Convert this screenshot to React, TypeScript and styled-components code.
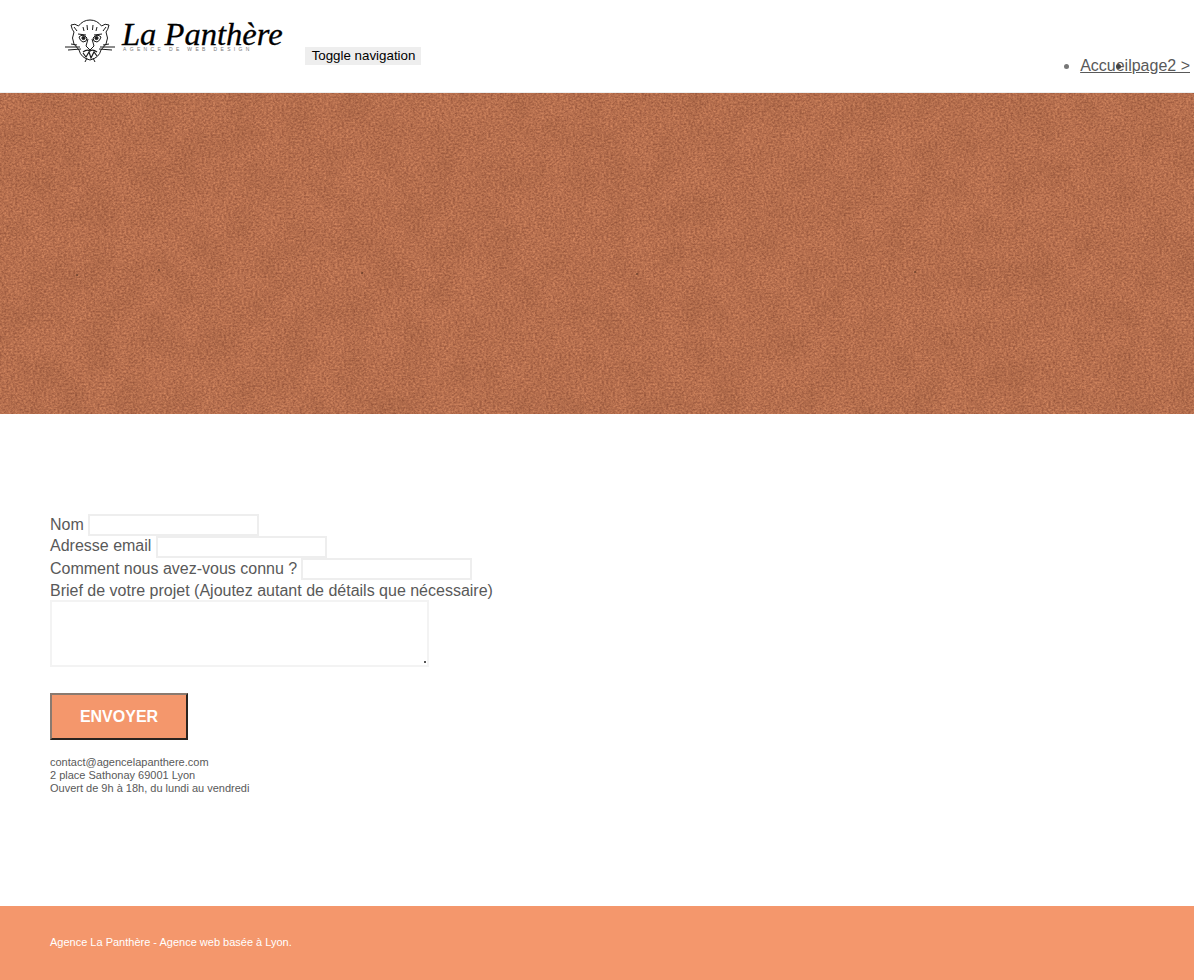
import React from "react";
import styled, { createGlobalStyle } from "styled-components";

const Global = createGlobalStyle`
  html, body { margin: 0; padding: 0; background: #fff; }
  body { font-family: "Liberation Sans", Arial, sans-serif; font-size: 16px; color: #595959; }
`;

const Header = styled.header`
  height: 92px;
  border-bottom: 1px solid #eeeeee;
  display: flex;
  position: relative;
`;
const Brand = styled.a`
  display: flex;
  align-items: flex-start;
  gap: 11px;
  padding: 19px 0 0 65px;
  width: 240px;
  flex: none;
  text-decoration: none;
`;
const BrandText = styled.div`
  display: flex;
  flex-direction: column;
`;
const BrandName = styled.span`
  font-family: "Liberation Serif", serif;
  font-style: italic;
  font-size: 32.6px;
  line-height: 31px;
  color: #000;
  -webkit-text-stroke: 0.3px #000;
  white-space: nowrap;
`;
const BrandTag = styled.span`
  font-size: 5px;
  line-height: 6px;
  letter-spacing: 3.35px;
  color: #777;
  margin-top: -4px;
  margin-left: 1px;
  white-space: nowrap;
`;
const Toggle = styled.button`
  align-self: flex-start;
  margin-top: 47px;
  width: 116px;
  height: 18px;
  padding: 0 0 0 1px;
  border: 0;
  background: #eeeeee;
  color: #000;
  font: 13.333px/18px "Liberation Sans", Arial, sans-serif;
`;
const NavList = styled.ul`
  margin: 0 4px 0 auto;
  padding: 56px 0 0;
  display: flex;
  height: 20px;
  list-style: disc;
  color: #777;
`;
const NavItem = styled.li<{ $dark?: boolean }>`
  line-height: 20px;
  &::marker { color: ${(p) => (p.$dark ? "#444" : "#777")}; }
`;
const NavLink = styled.a`
  color: #595959;
  text-decoration: underline;
`;

const Hero = styled.section`
  height: 321px;
  background: #b97150;
  position: relative;
  overflow: hidden;
`;
const HeroTexture = styled.svg`
  position: absolute;
  inset: 0;
  width: 100%;
  height: 100%;
  display: block;
`;

const Main = styled.main`
  padding: 100px 50px 0;
  height: 492px;
  box-sizing: border-box;
`;
const Form = styled.form`
  display: flex;
  flex-direction: column;
  align-items: flex-start;
`;
const Row = styled.label<{ $h?: number }>`
  display: flex;
  align-items: center;
  gap: 4.2px;
  height: ${(p) => p.$h ?? 22}px;
  line-height: 20px;
  white-space: nowrap;
`;
const LabelText = styled.span<{ $shift?: number }>`
  position: relative;
  top: ${(p) => p.$shift ?? 0}px;
`;
const Input = styled.input`
  width: 171px;
  height: 22px;
  box-sizing: border-box;
  border: 2px solid #eeeeee;
  background: #fff;
  padding: 1px 2px;
  margin: 0;
`;
const Area = styled.textarea`
  display: block;
  width: 379px;
  height: 67px;
  box-sizing: border-box;
  border: 2px solid #f3f3f3;
  background: #fff;
  margin: 0;
  &::-webkit-resizer {
    background: linear-gradient(#555, #555) no-repeat right 1px bottom 2px / 2px 2px;
  }
`;
const Send = styled.button`
  width: 138px;
  height: 47px;
  margin-top: 26px;
  border: 2px solid;
  border-color: #8a7a70 #2a2420 #2a2420 #8a7a70;
  background: #f4976c;
  color: #fff;
  font: bold 16px "Liberation Sans", Arial, sans-serif;
  text-transform: uppercase;
  padding: 0;
`;
const Contact = styled.p`
  margin: 16px 0 0;
  font-size: 11px;
  line-height: 13px;
  color: #595959;
`;
const Footer = styled.footer`
  height: 74px;
  background: #f4976c;
  color: #fff;
  font-size: 11px;
  line-height: 13px;
  padding: 30px 50px 0;
  box-sizing: border-box;
`;

const Panther = () => (
  <svg width="50" height="46" viewBox="0 0 50 46" fill="none" stroke="#1a1a1a" strokeWidth="1" style={{ marginTop: -2, marginRight: -4, flex: "none" }}>
    <path d="M6 8 Q10 6 13.5 9 Q18 3 25 3 Q32 3 36.5 9 Q40 6 44 8 Q43 13 41 15 Q44 21 41 27 L36 33 Q34 41 25 43 Q16 41 14 33 L9 27 Q6 21 9 15 Q7 13 6 8 Z" fill="#fff" />
    <path d="M9 10 L12 14 M41 10 L38 14" />
    <path d="M14 20 Q18 16 22 21 Q22 25 18 25 Q15 24 14 20 Z M36 20 Q32 16 28 21 Q28 25 32 25 Q35 24 36 20 Z" />
    <circle cx="18.5" cy="21" r="1.6" fill="#1a1a1a" />
    <circle cx="31.5" cy="21" r="1.6" fill="#1a1a1a" />
    <path d="M13 17 L21 18 M37 17 L29 18 M18 10 L19 14 M22 8 L22.5 13 M28 8 L27.5 13 M32 10 L31 14" />
    <path d="M23 22 L21 29 L25 33 L29 29 L27 22" />
    <path d="M0 30 L15 30 M3 33 L16 32 M6 27 L12 28 M50 30 L35 30 M47 33 L34 32 M44 27 L38 28" />
    <path d="M18 35 Q22 32 25 34 Q28 32 32 35 M18 36 L21 40 L24 35 L26 41 L29 35 L32 39" strokeWidth="1.2" />
    <path d="M20 45 L22 41 M30 45 L28 41" />
  </svg>
);

const Texture = () => (
  <HeroTexture aria-hidden="true">
    <defs>
      <filter id="grain" x="0" y="0" width="100%" height="100%" colorInterpolationFilters="sRGB">
        <feTurbulence type="fractalNoise" baseFrequency="0.45 0.55" numOctaves={2} seed={4} />
        <feGaussianBlur stdDeviation="0.6" />
        <feColorMatrix values="0.34 0 0 0 0.55  0.28 0 0 0 0.30  0.2 0 0 0 0.21  0 0 0 0 1" />
      </filter>
      <filter id="mottle" x="0" y="0" width="100%" height="100%" colorInterpolationFilters="sRGB">
        <feTurbulence type="fractalNoise" baseFrequency="0.035 0.03" numOctaves={3} seed={9} />
        <feColorMatrix values="0 0 0 0 0.3  0 0 0 0 0.14  0 0 0 0 0.07  1.2 0 0 0 -0.42" />
      </filter>
    </defs>
    <rect width="100%" height="100%" filter="url(#grain)" />
    <rect width="100%" height="100%" filter="url(#mottle)" opacity="0.14" />
    <g fill="#3a2015">
      <circle cx="159" cy="177" r="0.8" />
      <circle cx="77" cy="182" r="0.8" />
      <circle cx="362" cy="180" r="0.8" />
      <circle cx="637" cy="181" r="0.8" />
      <circle cx="915" cy="179" r="0.8" />
    </g>
  </HeroTexture>
);

export default function App() {
  return (
    <>
      <Global />
      <Header>
        <Brand href="#">
          <Panther />
          <BrandText>
            <BrandName>La Panthère</BrandName>
            <BrandTag>AGENCE DE WEB DESIGN</BrandTag>
          </BrandText>
        </Brand>
        <Toggle type="button">Toggle navigation</Toggle>
        <NavList>
          <NavItem><NavLink href="#">Accueil</NavLink></NavItem>
          <NavItem $dark><NavLink href="#">page2 &gt;</NavLink></NavItem>
        </NavList>
      </Header>
      <Hero><Texture /></Hero>
      <Main>
        <Form onSubmit={(e) => e.preventDefault()}>
          <Row><LabelText>Nom</LabelText><Input type="text" /></Row>
          <Row><LabelText $shift={-1}>Adresse email</LabelText><Input type="text" /></Row>
          <Row><LabelText>Comment nous avez-vous connu ?</LabelText><Input type="text" /></Row>
          <Row $h={20}><LabelText $shift={1}>Brief de votre projet (Ajoutez autant de détails que nécessaire)</LabelText></Row>
          <Area />
          <Send type="submit">Envoyer</Send>
        </Form>
        <Contact>
          contact@agencelapanthere.com<br />
          2 place Sathonay 69001 Lyon<br />
          Ouvert de 9h à 18h, du lundi au vendredi
        </Contact>
      </Main>
      <Footer>Agence La Panthère - Agence web basée à Lyon.</Footer>
    </>
  );
}
